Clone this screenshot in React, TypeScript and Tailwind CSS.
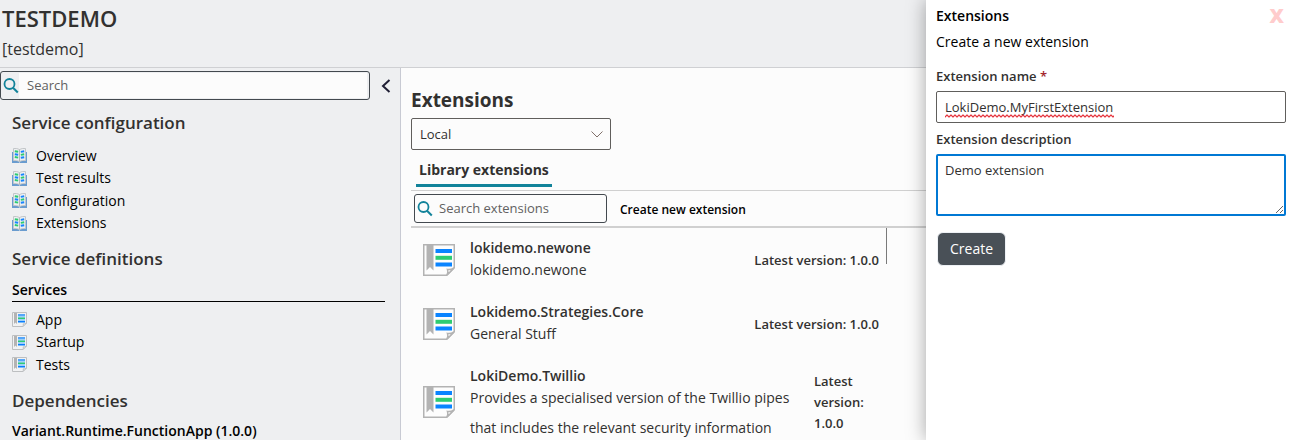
import React, { useState } from 'react';

function BookIcon() {
  return (
    <svg viewBox="0 0 15 15" className="h-[15px] w-[15px] shrink-0" aria-hidden="true">
      <path d="M0 4h2v9h5.500l.5.500V15H0zM15 4h-2v9H7.500v2H15z" fill="#6a9ccf" />
      <path d="M1.500 0.500Q5 0 7.500 1.500Q10 0 13.500 0.500V12.500Q10 12 7.500 13.500Q5 12 1.500 12.500z" fill="#eceff1" stroke="#c3c6c9" />
      <path d="M7.500 1.500v12" stroke="#b4b8bb" />
      <path d="M2.800 3.200l3.400.6M8.800 6.900l3.400-.6M2.800 9l3.400.6" stroke="#2ecc71" strokeWidth="1.900" />
      <path d="M8.800 3.900l3.400-.6M2.800 6.200l3.400.6M8.800 9.800l3.400-.6" stroke="#1684ff" strokeWidth="1.900" />
    </svg>
  );
}

function PageIcon({ className }: { className: string }) {
  return (
    <svg viewBox="0 0 32 32" className={className} aria-hidden="true">
      <path d="M.75.75h30.500v23l-7.500 7.500H.75z" fill="#fdfdfd" stroke="#b3b3b3" strokeWidth="1.500" />
      <path d="M3.500 1h7v25.500l-3.500-3.500-3.500 3.500z" fill="#b3b3b3" />
      <path d="M12.500 5h16.500v4H12.500zM12.500 18.500h16.500v4H12.500z" fill="#0a84ff" />
      <path d="M12.500 11.800h16.500v4H12.500z" fill="#2ecc71" />
      <path d="M24 31q1.500-3 .5-5.500q3 .5 6.500-1.500z" fill="#fdfdfd" stroke="#b3b3b3" strokeWidth="1.500" />
    </svg>
  );
}

function SmallPageIcon() {
  return (
    <svg viewBox="0 0 15 15" className="h-[15px] w-[15px] shrink-0" aria-hidden="true">
      <path d="M.5.500h14v10.500l-3.500 3.500H.5z" fill="#f1f2f3" stroke="#bdbfc1" />
      <path d="M2 1h3v11l-1.500-1.500L2 12z" fill="#b3b3b3" />
      <path d="M6 2h7v9H6z" fill="#9fd0f5" />
      <path d="M6 2.500h7v1H6zM6 9h7v1.200H6z" fill="#0a7cff" />
      <path d="M6 5.600h7v1.400H6z" fill="#2ecc71" />
      <path d="M11 14.500q.6-1.400.2-2.600q1.400.2 3.300-.9z" fill="#fdfdfd" stroke="#bdbfc1" />
    </svg>
  );
}

function SearchIcon() {
  return (
    <svg viewBox="0 0 16 16" className="h-4 w-4 shrink-0" fill="none" stroke="#12839a" strokeWidth="1.800" aria-hidden="true">
      <circle cx="6.500" cy="6" r="5" />
      <path d="M10 9.700l4.800 4.800" strokeWidth="2" />
    </svg>
  );
}

function Squiggle({ width }: { width: number }) {
  return (
    <svg className="pointer-events-none absolute top-[23px] left-[9px] h-1" style={{ width }} aria-hidden="true">
      <defs>
        <pattern id="squiggle" width="4" height="4" patternUnits="userSpaceOnUse">
          <path d="M-1 2Q0 4 1 2T3 2T5 2" fill="none" stroke="#e3222b" strokeWidth="1.200" />
        </pattern>
      </defs>
      <rect width="100%" height="4" fill="url(#squiggle)" />
    </svg>
  );
}

const extensions = [
  { name: 'lokidemo.newone', description: 'lokidemo.newone', tall: false },
  { name: 'Lokidemo.Strategies.Core', description: 'General Stuff', tall: false },
  {
    name: 'LokiDemo.Twillio',
    description: 'Provides a specialised version of the Twillio pipes that includes the relevant security information',
    tall: true,
  },
];

function Sidebar() {
  return (
    <aside className="flex w-[401px] shrink-0 flex-col border-r border-[#c8cad3]">
      <div className="flex items-center pt-[3px]">
        <label className="flex h-[29px] w-[370px] items-center rounded-[3px] border border-[#43494f] pr-0.5 pl-0.5">
          <SearchIcon />
          <input
            aria-label="Search"
            placeholder="Search"
            className="h-[25px] min-w-0 flex-1 bg-[#fcfcfc] px-2 pb-0.5 text-[13px] outline-none placeholder:text-[#616161]"
          />
        </label>
        <button aria-label="Collapse sidebar" className="ml-[11px]">
          <svg viewBox="0 0 10 14" className="h-[14px] w-[10px]" fill="none" stroke="#201f35" strokeWidth="2" aria-hidden="true">
            <path d="M8.500 1L2 7l6.500 6" />
          </svg>
        </button>
      </div>
      <nav className="pr-[15px] pl-3">
        <h2 className="mt-[11px] text-[17px] leading-6 font-semibold text-[#323130]">Service configuration</h2>
        <ul className="mt-[9px]">
          {['Overview', 'Test results', 'Configuration', 'Extensions'].map((item) => (
            <li key={item} className="flex h-[22px] items-center odd:h-[23px]">
              <a href="#" className="flex items-center gap-[9px]">
                <BookIcon />
                {item}
              </a>
            </li>
          ))}
        </ul>
        <h2 className="mt-[13px] text-[17px] leading-6 font-semibold text-[#323130]">Service definitions</h2>
        <h3 className="mt-[10px] border-b border-black pb-0.5 text-sm leading-[18px] font-semibold">Services</h3>
        <ul className="mt-[6px]">
          {['App', 'Startup', 'Tests'].map((item) => (
            <li key={item} className="flex h-[22px] items-center odd:h-[23px]">
              <a href="#" className="flex items-center gap-[9px]">
                <SmallPageIcon />
                {item}
              </a>
            </li>
          ))}
        </ul>
        <h2 className="mt-[13px] text-[17px] leading-6 font-semibold text-[#323130]">Dependencies</h2>
        <h3 className="mt-[9px] text-sm leading-[18px] font-semibold">Variant.Runtime.FunctionApp (1.0.0)</h3>
      </nav>
    </aside>
  );
}

function Library() {
  return (
    <main className="min-w-0 flex-1 bg-[#fcfcfc] pt-[19px] pl-[10px] text-[#323130]">
      <h1 className="text-[19px] leading-[26px] font-bold">Extensions</h1>
      <div className="relative mt-[5px] w-[200px]">
        <select aria-label="Source" className="h-8 w-full appearance-none rounded-xs border border-[#605e5c] bg-transparent px-2 text-[13px]">
          <option>Local</option>
        </select>
        <svg viewBox="0 0 12 7" className="pointer-events-none absolute top-[13px] right-2 h-[7px] w-3" fill="none" stroke="#80706a" aria-hidden="true">
          <path d="M.5.500L6 6l5.500-5.500" />
        </svg>
      </div>
      <div role="tablist" className="mt-[6px] border-b border-[#d0d0d0] pb-[3px] pl-[5px]">
        <button role="tab" aria-selected="true" className="h-[31px] border-b-[3px] border-[#12839a] px-[3px] text-sm font-bold">
          Library extensions
        </button>
      </div>
      <div className="flex items-center gap-[13px] border-b-2 border-[#d0d0d0] py-[3px] pl-[3px]">
        <label className="flex h-[29px] w-[193px] items-center rounded-[3px] border border-[#43494f] pr-0.5 pl-0.5">
          <SearchIcon />
          <input
            aria-label="Search extensions"
            placeholder="Search extensions"
            className="h-[25px] min-w-0 flex-1 bg-transparent pb-0.5 pl-1.5 text-[13px] outline-none placeholder:text-[#616161]"
          />
        </label>
        <button className="pt-0.5 text-xs font-semibold text-black">Create new extension</button>
      </div>
      <div className="flex items-start">
        <ul className="min-w-0 flex-1">
          {extensions.map((extension) => (
            <li key={extension.name} className="flex items-center pt-[9px] pb-[9px] pl-3">
              <PageIcon className="h-8 w-8 shrink-0" />
              <div className="ml-[15px] min-w-0 flex-1">
                <h2 className="leading-[22px] font-semibold">{extension.name}</h2>
                <p className={extension.tall ? '-my-1 leading-[30px]' : 'pb-0.5 leading-[22px]'}>{extension.description}</p>
              </div>
              <p className={extension.tall ? 'ml-4 w-[72px] text-[13px] leading-[21px] font-semibold' : 'pr-[7px] text-[13px] leading-[21px] font-semibold'}>
                Latest version: 1.0.0
              </p>
            </li>
          ))}
        </ul>
        <div className="mr-[39px] h-9 w-px bg-[#7a7a7a]" />
      </div>
    </main>
  );
}

function ExtensionPanel() {
  const [name, setName] = useState('LokiDemo.MyFirstExtension');
  const [description, setDescription] = useState('Demo extension');
  return (
    <aside className="z-10 w-[366px] shrink-0 bg-white pt-[6px] pr-[6px] pl-[10px] shadow-[0_0_18px_rgba(0,0,0,0.35)]">
      <div className="flex h-5 items-center justify-between pr-0.5">
        <h2 className="font-semibold">Extensions</h2>
        <button aria-label="Close" className="text-xl font-extrabold text-[#ffcccc]">X</button>
      </div>
      <p className="mt-[6px] leading-5">Create a new extension</p>
      <form onSubmit={(event) => event.preventDefault()}>
        <label htmlFor="extension-name" className="mt-[14px] block text-[13px] leading-5 font-semibold text-[#323130]">
          Extension name <span className="text-[#a4262c]">*</span>
        </label>
        <div className="relative mt-[5px]">
          <input
            id="extension-name"
            value={name}
            spellCheck={false}
            onChange={(event) => setName(event.target.value)}
            className="block h-8 w-full rounded-xs border border-[#605e5c] px-2 text-[13px] text-[#323130] outline-none"
          />
          <Squiggle width={name.length * 6.76} />
        </div>
        <label htmlFor="extension-description" className="mt-[6px] block text-[13px] leading-5 font-semibold text-[#323130]">
          Extension description
        </label>
        <textarea
          id="extension-description"
          value={description}
          onChange={(event) => setDescription(event.target.value)}
          className="mt-[5px] block h-[62px] w-full rounded-xs border-2 border-[#0078d4] px-[7px] py-1 text-[13px] leading-5 text-[#323130] outline-none"
        />
        <button type="submit" className="mt-4 ml-px h-[34px] rounded-md border border-[#eef1f5] bg-[#495057] px-3 text-white">
          Create
        </button>
      </form>
    </aside>
  );
}

export default function App() {
  return (
    <div className="relative flex h-screen overflow-hidden bg-[#eeeff1] font-['Open_Sans','Noto_Sans',sans-serif] text-sm text-black">
      <div className="flex min-w-0 flex-1 flex-col">
        <header className="h-[68px] shrink-0 border-b border-[#cfd0d3] pt-[3px] pl-0.5 text-[#323130]">
          <h1 className="text-[22px] leading-[30px] font-semibold">TESTDEMO</h1>
          <p className="mt-1 text-base leading-6">[testdemo]</p>
        </header>
        <div className="flex min-h-0 flex-1">
          <Sidebar />
          <Library />
        </div>
      </div>
      <ExtensionPanel />
    </div>
  );
}
